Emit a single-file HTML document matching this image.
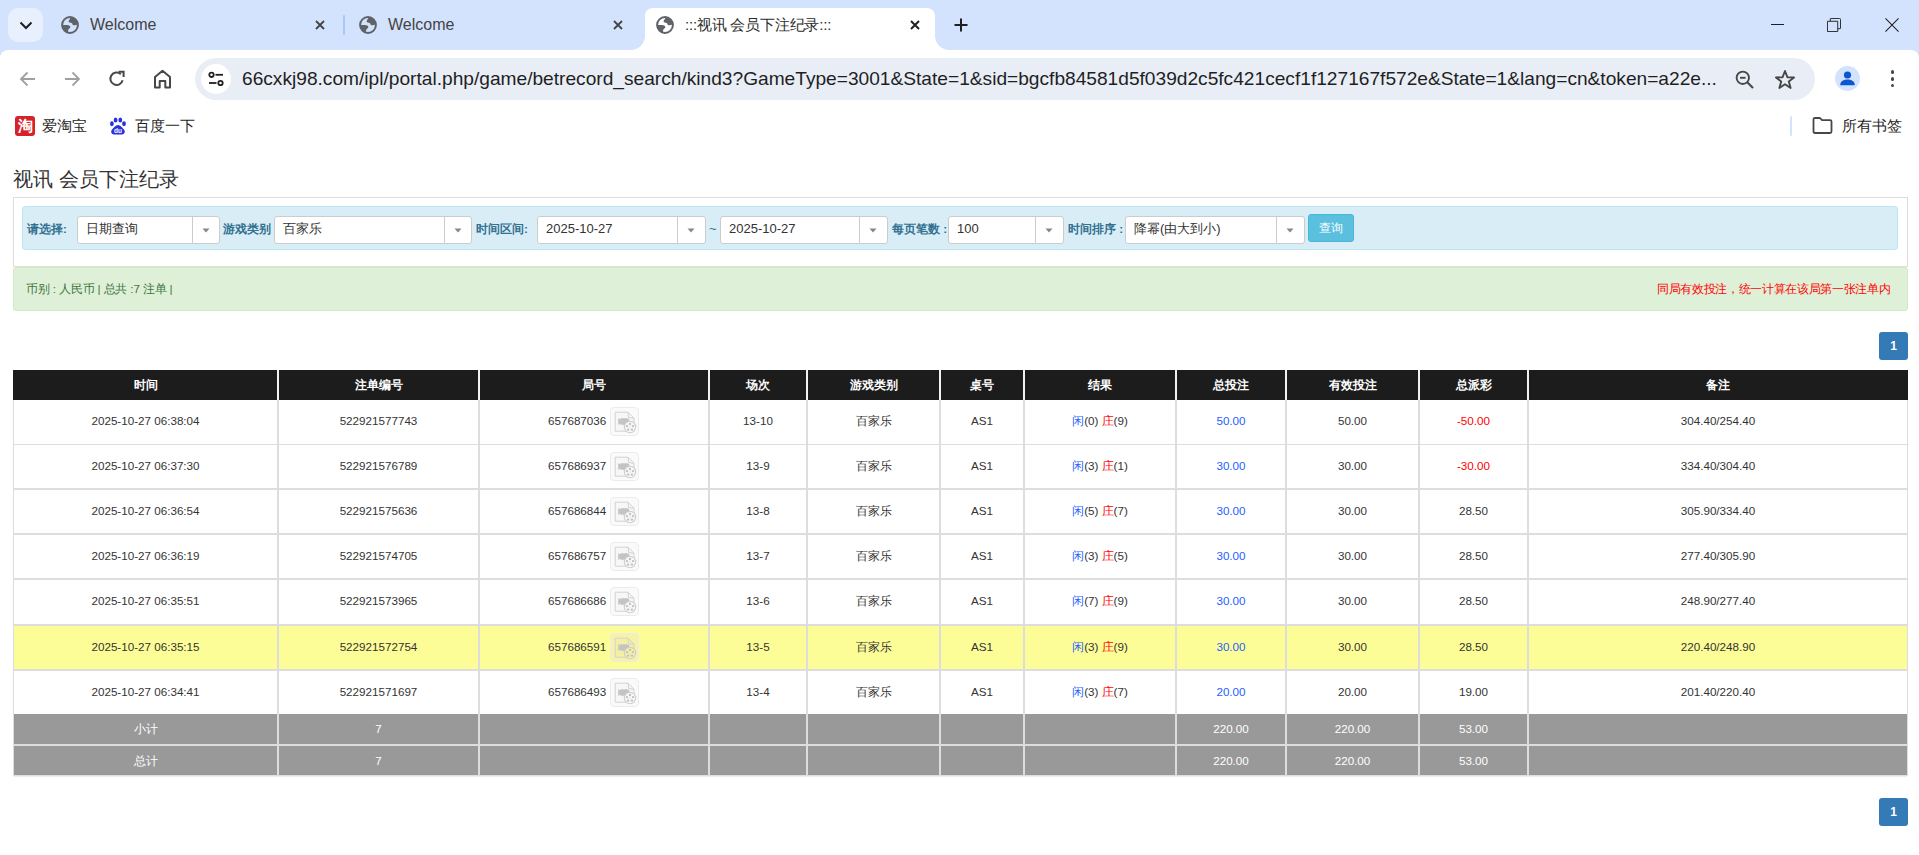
<!DOCTYPE html><html><head><meta charset="utf-8"><style>
*{margin:0;padding:0;box-sizing:border-box}
html,body{width:1919px;height:855px;overflow:hidden;background:#fff;font-family:"Liberation Sans", sans-serif;position:relative}
.ab{position:absolute}
.c{position:absolute;text-align:center;white-space:nowrap}
</style></head><body>
<div class="ab" style="left:0;top:0;width:1919px;height:70px;background:#d3e3fd"></div>
<div class="ab" style="left:8px;top:8px;width:35px;height:34px;border-radius:10px;background:#e8f0fe"></div>
<svg class="ab" style="left:18px;top:18px" width="16" height="14" viewBox="0 0 16 14"><path d="M2.5 4.5 L8 10 L13.5 4.5" fill="none" stroke="#1f1f1f" stroke-width="2"/></svg>
<svg class="ab" style="left:61px;top:16px" width="18" height="18" viewBox="0 0 18 18"><defs><clipPath id="gc70"><circle cx="9" cy="9" r="8"/></clipPath></defs><circle cx="9" cy="9" r="7.9" fill="none" stroke="#5f6368" stroke-width="2"/><g clip-path="url(#gc70)" fill="#5f6368"><path d="M10 0.5 C9.6 2.5 7.6 4.0 7.5 5.4 C7.4 6.6 9.6 6.4 10.6 6.9 C11.8 7.5 11.4 9.2 12.6 9.2 C14 9.2 15.5 8.6 17.5 8.4 L17.5 0.5 Z"/><path d="M0.5 9 C3 9 6.6 8.8 8.2 9.6 C9.6 10.3 9.8 11.6 8.4 12.4 C7.2 13.1 6.8 14.5 7 17.5 L0.5 17.5 Z"/></g></svg>
<div class="ab" style="left:90px;top:15px;font-size:16px;color:#444;line-height:20px">Welcome</div>
<svg class="ab" style="left:315px;top:20px" width="10" height="10" viewBox="0 0 10 10"><path d="M1 1 L9 9 M9 1 L1 9" stroke="#444" stroke-width="1.8" fill="none"/></svg>
<div class="ab" style="left:343px;top:15px;width:2px;height:20px;border-radius:1px;background:#a8c7fa"></div>
<svg class="ab" style="left:359px;top:16px" width="18" height="18" viewBox="0 0 18 18"><defs><clipPath id="gc368"><circle cx="9" cy="9" r="8"/></clipPath></defs><circle cx="9" cy="9" r="7.9" fill="none" stroke="#5f6368" stroke-width="2"/><g clip-path="url(#gc368)" fill="#5f6368"><path d="M10 0.5 C9.6 2.5 7.6 4.0 7.5 5.4 C7.4 6.6 9.6 6.4 10.6 6.9 C11.8 7.5 11.4 9.2 12.6 9.2 C14 9.2 15.5 8.6 17.5 8.4 L17.5 0.5 Z"/><path d="M0.5 9 C3 9 6.6 8.8 8.2 9.6 C9.6 10.3 9.8 11.6 8.4 12.4 C7.2 13.1 6.8 14.5 7 17.5 L0.5 17.5 Z"/></g></svg>
<div class="ab" style="left:388px;top:15px;font-size:16px;color:#444;line-height:20px">Welcome</div>
<svg class="ab" style="left:613px;top:20px" width="10" height="10" viewBox="0 0 10 10"><path d="M1 1 L9 9 M9 1 L1 9" stroke="#444" stroke-width="1.8" fill="none"/></svg>
<div class="ab" style="left:645px;top:8px;width:290px;height:42px;background:#fff;border-radius:8px 8px 0 0"></div>
<div class="ab" style="left:631px;top:36px;width:14px;height:14px;background:radial-gradient(circle at 0 0,#d3e3fd 13.5px,#fff 14.2px)"></div>
<div class="ab" style="left:935px;top:36px;width:14px;height:14px;background:radial-gradient(circle at 100% 0,#d3e3fd 13.5px,#fff 14.2px)"></div>
<svg class="ab" style="left:656px;top:16px" width="18" height="18" viewBox="0 0 18 18"><defs><clipPath id="gc665"><circle cx="9" cy="9" r="8"/></clipPath></defs><circle cx="9" cy="9" r="7.9" fill="none" stroke="#5f6368" stroke-width="2"/><g clip-path="url(#gc665)" fill="#5f6368"><path d="M10 0.5 C9.6 2.5 7.6 4.0 7.5 5.4 C7.4 6.6 9.6 6.4 10.6 6.9 C11.8 7.5 11.4 9.2 12.6 9.2 C14 9.2 15.5 8.6 17.5 8.4 L17.5 0.5 Z"/><path d="M0.5 9 C3 9 6.6 8.8 8.2 9.6 C9.6 10.3 9.8 11.6 8.4 12.4 C7.2 13.1 6.8 14.5 7 17.5 L0.5 17.5 Z"/></g></svg>
<div class="ab" style="left:685px;top:15px;font-size:15px;letter-spacing:-0.2px;color:#2b2b2b;line-height:20px">:::视讯 会员下注纪录:::</div>
<svg class="ab" style="left:910px;top:20px" width="10" height="10" viewBox="0 0 10 10"><path d="M1 1 L9 9 M9 1 L1 9" stroke="#1f1f1f" stroke-width="2" fill="none"/></svg>
<svg class="ab" style="left:954px;top:18px" width="14" height="14" viewBox="0 0 14 14"><path d="M7 0.5 V13.5 M0.5 7 H13.5" stroke="#1f1f1f" stroke-width="2" fill="none"/></svg>
<div class="ab" style="left:1771px;top:24px;width:13px;height:1px;background:#1f1f1f"></div>
<svg class="ab" style="left:1827px;top:18px" width="14" height="14" viewBox="0 0 15 15"><path d="M0.5 3.5 H11.5 V14.5 H0.5 Z" fill="none" stroke="#1f1f1f" stroke-width="1"/><path d="M3.5 3.5 V1 Q3.5 0.5 4 0.5 H13.5 Q14.5 0.5 14.5 1.5 V11 Q14.5 11.5 14 11.5 H11.5" fill="none" stroke="#1f1f1f" stroke-width="1"/></svg>
<svg class="ab" style="left:1884.5px;top:17.5px" width="14" height="14" viewBox="0 0 15 15"><path d="M0.5 0.5 L14.5 14.5 M14.5 0.5 L0.5 14.5" stroke="#1f1f1f" stroke-width="1.1" fill="none"/></svg>
<div class="ab" style="left:0;top:50px;width:1919px;height:805px;background:#fff;border-radius:8px 8px 0 0"></div>
<svg class="ab" style="left:19px;top:70px" width="18" height="18" viewBox="0 0 18 18"><path d="M16 9 H2.5 M8.5 2.5 L2 9 L8.5 15.5" fill="none" stroke="#a0a0a0" stroke-width="1.8"/></svg>
<svg class="ab" style="left:63px;top:70px" width="18" height="18" viewBox="0 0 18 18"><path d="M2 9 H15.5 M9.5 2.5 L16 9 L9.5 15.5" fill="none" stroke="#a0a0a0" stroke-width="1.8"/></svg>
<svg class="ab" style="left:108px;top:70px" width="18" height="18" viewBox="0 0 18 18"><path d="M14.6 10.2 A6.2 6.2 0 1 1 12.8 4.2" fill="none" stroke="#474747" stroke-width="2"/><path d="M10.5 1.8 H15.6 V6.9" fill="none" stroke="#474747" stroke-width="2"/></svg>
<svg class="ab" style="left:153px;top:69px" width="19" height="20" viewBox="0 0 19 20"><path d="M2 18.5 V8 L9.5 1.8 L17 8 V18.5 H12.3 V12 H6.7 V18.5 Z" fill="none" stroke="#474747" stroke-width="2" stroke-linejoin="round"/></svg>
<div class="ab" style="left:195px;top:58px;width:1620px;height:42px;border-radius:21px;background:#e9eef6"></div>
<div class="ab" style="left:201px;top:64px;width:30px;height:30px;border-radius:15px;background:#fff"></div>
<svg class="ab" style="left:207px;top:70px" width="18" height="18" viewBox="0 0 18 18"><circle cx="4.5" cy="4.8" r="2.2" fill="none" stroke="#1f1f1f" stroke-width="1.8"/><path d="M8.5 4.8 H16" stroke="#1f1f1f" stroke-width="1.8"/><circle cx="13.5" cy="13" r="2.2" fill="none" stroke="#1f1f1f" stroke-width="1.8"/><path d="M2 13 H9.5" stroke="#1f1f1f" stroke-width="1.8"/></svg>
<div id="url" class="ab" style="left:242px;top:67px;font-size:19.15px;line-height:24px;color:#1f1f1f;white-space:nowrap">66cxkj98.com/ipl/portal.php/game/betrecord_search/kind3?GameType=3001&amp;State=1&amp;sid=bgcfb84581d5f039d2c5fc421cecf1f127167f572e&amp;State=1&amp;lang=cn&amp;token=a22e...</div>
<svg class="ab" style="left:1735px;top:70px" width="20" height="20" viewBox="0 0 20 20"><circle cx="7.8" cy="7.8" r="6.2" fill="none" stroke="#474747" stroke-width="1.9"/><path d="M5 7.8 H10.6" stroke="#474747" stroke-width="1.9"/><path d="M12.3 12.3 L18 18" stroke="#474747" stroke-width="2.1"/></svg>
<svg class="ab" style="left:1774px;top:69px" width="22" height="21" viewBox="0 0 22 21"><path d="M11 2 L13.4 8.2 L20 8.4 L14.8 12.5 L16.6 19 L11 15.3 L5.4 19 L7.2 12.5 L2 8.4 L8.6 8.2 Z" fill="none" stroke="#474747" stroke-width="1.9" stroke-linejoin="round"/></svg>
<div class="ab" style="left:1835px;top:66px;width:25px;height:25px;border-radius:13px;background:#d3e3fd"></div>
<svg class="ab" style="left:1838px;top:69px" width="19" height="19" viewBox="0 0 19 19"><circle cx="9.5" cy="6" r="3.6" fill="#0b57d0"/><path d="M2.2 16.2 C2.2 12 6 10.6 9.5 10.6 C13 10.6 16.8 12 16.8 16.2 Z" fill="#0b57d0"/></svg>
<div class="ab" style="left:1890.5px;top:69.89999999999999px;width:3.8px;height:3.8px;border-radius:2px;background:#474747"></div>
<div class="ab" style="left:1890.5px;top:76.89999999999999px;width:3.8px;height:3.8px;border-radius:2px;background:#474747"></div>
<div class="ab" style="left:1890.5px;top:83.69999999999999px;width:3.8px;height:3.8px;border-radius:2px;background:#474747"></div>
<div class="ab" style="left:15px;top:116px;width:20px;height:20px;border-radius:3px;background:#d7222a;color:#fff;font-size:15px;line-height:20px;text-align:center;font-weight:bold">淘</div>
<div class="ab" style="left:42px;top:117px;font-size:14.5px;line-height:18px;color:#1f1f1f">爱淘宝</div>
<svg class="ab" style="left:109px;top:117px" width="18" height="18" viewBox="0 0 18 18"><ellipse cx="2.9" cy="6.75" rx="1.9" ry="2.4" fill="#2932e1"/><ellipse cx="6.6" cy="3" rx="1.9" ry="2.5" fill="#2932e1"/><ellipse cx="11.3" cy="3" rx="1.9" ry="2.5" fill="#2932e1"/><ellipse cx="15" cy="6.75" rx="1.9" ry="2.4" fill="#2932e1"/><path d="M9 8 C6.5 8 5 10.5 3.5 12 C1.6 13.6 1.6 17.4 5 17.4 H13 C16.4 17.4 16.4 13.6 14.5 12 C13 10.5 11.5 8 9 8 Z" fill="#2932e1"/><text x="9" y="16" font-size="6.5" fill="#fff" text-anchor="middle" font-family="Liberation Sans" font-weight="bold">du</text></svg>
<div class="ab" style="left:135px;top:117px;font-size:14.5px;line-height:18px;color:#1f1f1f">百度一下</div>
<div class="ab" style="left:1790px;top:116px;width:2px;height:20px;background:#d3e3fd;border-radius:1px"></div>
<svg class="ab" style="left:1812px;top:117px" width="21" height="17" viewBox="0 0 21 17"><path d="M1.5 2.5 Q1.5 1 3 1 H8 L10 3.2 H18 Q19.5 3.2 19.5 4.7 V14.5 Q19.5 16 18 16 H3 Q1.5 16 1.5 14.5 Z" fill="none" stroke="#474747" stroke-width="1.8" stroke-linejoin="round"/></svg>
<div class="ab" style="left:1842px;top:117px;font-size:14.5px;line-height:18px;color:#1f1f1f">所有书签</div>
<div class="ab" style="left:13px;top:166px;font-size:20px;line-height:26px;color:#333;white-space:nowrap">视讯 会员下注纪录</div>
<div class="ab" style="left:13px;top:197px;width:1895px;height:70px;border:1px solid #ddd;background:#fff"></div>
<div class="ab" style="left:22px;top:206px;width:1876px;height:44px;border:1px solid #bce8f1;border-radius:3px;background:#d9edf7"></div>
<div class="ab" style="left:27px;top:221px;font-size:11.7px;font-weight:bold;color:#31708f;line-height:16px;white-space:nowrap">请选择:</div>
<div class="ab" style="left:77px;top:216px;width:143px;height:28px;border:1px solid #ccc;border-radius:3px;background:#fff"></div>
<div class="ab" style="left:192px;top:217px;width:1px;height:26px;background:#ccc"></div>
<svg class="ab" style="left:201.5px;top:227.5px" width="8" height="5" viewBox="0 0 8 5"><path d="M0.5 0.5 H7.5 L4 4.5 Z" fill="#888"/></svg>
<div class="ab" style="left:86px;top:221px;font-size:13px;line-height:16px;color:#333;white-space:nowrap">日期查询</div>
<div class="ab" style="left:223px;top:221px;font-size:11.7px;font-weight:bold;color:#31708f;line-height:16px;white-space:nowrap">游戏类别</div>
<div class="ab" style="left:274px;top:216px;width:198px;height:28px;border:1px solid #ccc;border-radius:3px;background:#fff"></div>
<div class="ab" style="left:444px;top:217px;width:1px;height:26px;background:#ccc"></div>
<svg class="ab" style="left:453.5px;top:227.5px" width="8" height="5" viewBox="0 0 8 5"><path d="M0.5 0.5 H7.5 L4 4.5 Z" fill="#888"/></svg>
<div class="ab" style="left:283px;top:221px;font-size:13px;line-height:16px;color:#333;white-space:nowrap">百家乐</div>
<div class="ab" style="left:476px;top:221px;font-size:11.7px;font-weight:bold;color:#31708f;line-height:16px;white-space:nowrap">时间区间:</div>
<div class="ab" style="left:537px;top:216px;width:169px;height:28px;border:1px solid #ccc;border-radius:3px;background:#fff"></div>
<div class="ab" style="left:677px;top:217px;width:1px;height:26px;background:#ccc"></div>
<svg class="ab" style="left:687.0px;top:227.5px" width="8" height="5" viewBox="0 0 8 5"><path d="M0.5 0.5 H7.5 L4 4.5 Z" fill="#888"/></svg>
<div class="ab" style="left:546px;top:221px;font-size:13px;line-height:16px;color:#333;white-space:nowrap">2025-10-27</div>
<div class="ab" style="left:709px;top:221px;font-size:13px;line-height:16px;color:#31708f">~</div>
<div class="ab" style="left:720px;top:216px;width:168px;height:28px;border:1px solid #ccc;border-radius:3px;background:#fff"></div>
<div class="ab" style="left:859px;top:217px;width:1px;height:26px;background:#ccc"></div>
<svg class="ab" style="left:869.0px;top:227.5px" width="8" height="5" viewBox="0 0 8 5"><path d="M0.5 0.5 H7.5 L4 4.5 Z" fill="#888"/></svg>
<div class="ab" style="left:729px;top:221px;font-size:13px;line-height:16px;color:#333;white-space:nowrap">2025-10-27</div>
<div class="ab" style="left:892px;top:221px;font-size:11.7px;font-weight:bold;color:#31708f;line-height:16px;white-space:nowrap">每页笔数 :</div>
<div class="ab" style="left:948px;top:216px;width:116px;height:28px;border:1px solid #ccc;border-radius:3px;background:#fff"></div>
<div class="ab" style="left:1035px;top:217px;width:1px;height:26px;background:#ccc"></div>
<svg class="ab" style="left:1045.0px;top:227.5px" width="8" height="5" viewBox="0 0 8 5"><path d="M0.5 0.5 H7.5 L4 4.5 Z" fill="#888"/></svg>
<div class="ab" style="left:957px;top:221px;font-size:13px;line-height:16px;color:#333;white-space:nowrap">100</div>
<div class="ab" style="left:1068px;top:221px;font-size:11.7px;font-weight:bold;color:#31708f;line-height:16px;white-space:nowrap">时间排序 :</div>
<div class="ab" style="left:1125px;top:216px;width:180px;height:28px;border:1px solid #ccc;border-radius:3px;background:#fff"></div>
<div class="ab" style="left:1276px;top:217px;width:1px;height:26px;background:#ccc"></div>
<svg class="ab" style="left:1286.0px;top:227.5px" width="8" height="5" viewBox="0 0 8 5"><path d="M0.5 0.5 H7.5 L4 4.5 Z" fill="#888"/></svg>
<div class="ab" style="left:1134px;top:221px;font-size:13px;line-height:16px;color:#333;white-space:nowrap">降幂(由大到小)</div>
<div class="ab" style="left:1308px;top:214px;width:46px;height:28px;border:1px solid #46b8da;border-radius:3px;background:#5bc0de;color:#fff;font-size:12px;line-height:26px;text-align:center">查询</div>
<div class="ab" style="left:13px;top:267px;width:1895px;height:44px;border:1px solid #d6e9c6;border-radius:3px;background:#dff0d8"></div>
<div class="ab" style="left:26px;top:281px;font-size:11.65px;letter-spacing:-0.15px;line-height:16px;color:#3c763d;white-space:nowrap">币别 : 人民币 | 总共 :7 注单 |</div>
<div class="ab" style="left:1657px;top:281px;font-size:12px;letter-spacing:-0.33px;line-height:16px;color:#ff0000;white-space:nowrap">同局有效投注，统一计算在该局第一张注单内</div>
<div class="ab" style="left:1879px;top:332px;width:29px;height:28px;border-radius:3px;background:#337ab7;color:#fff;font-size:12px;font-weight:bold;line-height:28px;text-align:center">1</div>
<div class="ab" style="left:1879px;top:798px;width:29px;height:28px;border-radius:3px;background:#337ab7;color:#fff;font-size:12px;font-weight:bold;line-height:28px;text-align:center">1</div>
<div class="ab" style="left:13px;top:370px;width:1895px;height:30px;background:#1c1c1c"></div>
<div class="ab" style="left:277px;top:370px;width:2px;height:30px;background:#f2f2f2"></div>
<div class="ab" style="left:478px;top:370px;width:2px;height:30px;background:#f2f2f2"></div>
<div class="ab" style="left:708px;top:370px;width:2px;height:30px;background:#f2f2f2"></div>
<div class="ab" style="left:806px;top:370px;width:2px;height:30px;background:#f2f2f2"></div>
<div class="ab" style="left:939px;top:370px;width:2px;height:30px;background:#f2f2f2"></div>
<div class="ab" style="left:1023px;top:370px;width:2px;height:30px;background:#f2f2f2"></div>
<div class="ab" style="left:1175px;top:370px;width:2px;height:30px;background:#f2f2f2"></div>
<div class="ab" style="left:1285px;top:370px;width:2px;height:30px;background:#f2f2f2"></div>
<div class="ab" style="left:1418px;top:370px;width:2px;height:30px;background:#f2f2f2"></div>
<div class="ab" style="left:1527px;top:370px;width:2px;height:30px;background:#f2f2f2"></div>
<div class="c" style="left:14px;top:370px;width:263px;height:30px;line-height:30px;font-size:12px;font-weight:bold;color:#fff">时间</div>
<div class="c" style="left:279px;top:370px;width:199px;height:30px;line-height:30px;font-size:12px;font-weight:bold;color:#fff">注单编号</div>
<div class="c" style="left:480px;top:370px;width:228px;height:30px;line-height:30px;font-size:12px;font-weight:bold;color:#fff">局号</div>
<div class="c" style="left:710px;top:370px;width:96px;height:30px;line-height:30px;font-size:12px;font-weight:bold;color:#fff">场次</div>
<div class="c" style="left:808px;top:370px;width:131px;height:30px;line-height:30px;font-size:12px;font-weight:bold;color:#fff">游戏类别</div>
<div class="c" style="left:941px;top:370px;width:82px;height:30px;line-height:30px;font-size:12px;font-weight:bold;color:#fff">桌号</div>
<div class="c" style="left:1025px;top:370px;width:150px;height:30px;line-height:30px;font-size:12px;font-weight:bold;color:#fff">结果</div>
<div class="c" style="left:1177px;top:370px;width:108px;height:30px;line-height:30px;font-size:12px;font-weight:bold;color:#fff">总投注</div>
<div class="c" style="left:1287px;top:370px;width:131px;height:30px;line-height:30px;font-size:12px;font-weight:bold;color:#fff">有效投注</div>
<div class="c" style="left:1420px;top:370px;width:107px;height:30px;line-height:30px;font-size:12px;font-weight:bold;color:#fff">总派彩</div>
<div class="c" style="left:1529px;top:370px;width:378px;height:30px;line-height:30px;font-size:12px;font-weight:bold;color:#fff">备注</div>
<div class="ab" style="left:13px;top:400px;width:1895px;height:314px;background:#fff"></div>
<div class="ab" style="left:14px;top:626px;width:1893px;height:43px;background:#fdfd98"></div>
<div class="ab" style="left:13px;top:444px;width:1895px;height:1px;background:#ddd"></div>
<div class="ab" style="left:13px;top:488px;width:1895px;height:2px;background:#ddd"></div>
<div class="ab" style="left:13px;top:533px;width:1895px;height:2px;background:#ddd"></div>
<div class="ab" style="left:13px;top:578px;width:1895px;height:2px;background:#ddd"></div>
<div class="ab" style="left:13px;top:624px;width:1895px;height:2px;background:#ddd"></div>
<div class="ab" style="left:13px;top:669px;width:1895px;height:2px;background:#ddd"></div>
<div class="ab" style="left:13px;top:400px;width:1px;height:376px;background:#ddd"></div>
<div class="ab" style="left:1907px;top:400px;width:1px;height:314px;background:#ddd"></div>
<div class="ab" style="left:277px;top:400px;width:2px;height:314px;background:#ddd"></div>
<div class="ab" style="left:478px;top:400px;width:2px;height:314px;background:#ddd"></div>
<div class="ab" style="left:708px;top:400px;width:2px;height:314px;background:#ddd"></div>
<div class="ab" style="left:806px;top:400px;width:2px;height:314px;background:#ddd"></div>
<div class="ab" style="left:939px;top:400px;width:2px;height:314px;background:#ddd"></div>
<div class="ab" style="left:1023px;top:400px;width:2px;height:314px;background:#ddd"></div>
<div class="ab" style="left:1175px;top:400px;width:2px;height:314px;background:#ddd"></div>
<div class="ab" style="left:1285px;top:400px;width:2px;height:314px;background:#ddd"></div>
<div class="ab" style="left:1418px;top:400px;width:2px;height:314px;background:#ddd"></div>
<div class="ab" style="left:1527px;top:400px;width:2px;height:314px;background:#ddd"></div>
<div class="c" style="left:14px;top:399px;width:263px;height:44px;line-height:44px;font-size:11.65px;color:#333;">2025-10-27 06:38:04</div>
<div class="c" style="left:279px;top:399px;width:199px;height:44px;line-height:44px;font-size:11.65px;color:#333;">522921577743</div>
<div class="ab" style="left:548px;top:399px;height:44px;line-height:44px;font-size:11.65px;color:#333;white-space:nowrap">657687036</div>
<svg width="29" height="29" viewBox="0 0 29 29" style="position:absolute;left:610px;top:407px"><rect x="0.5" y="0.5" width="28" height="28" rx="3.5" fill="#fafafa" stroke="#ebebeb"/><path d="M5.2 5.2 H18 L24 11.2 V24.2 H5.2 Z" fill="#f7f7f7" stroke="#d2d2d2" stroke-width="1"/><path d="M18 5.2 L18.6 10.6 L24 11.2" fill="none" stroke="#d2d2d2" stroke-width="1"/><path d="M8.2 11 L10.4 12.6 V11.2 H17.4 L19.2 12.2 V16.6 L17.4 17.8 H10.4 V16.4 L8.2 18 Z" fill="#c4c4c4"/><circle cx="20" cy="20" r="5.7" fill="#f7f7f7" stroke="#cdcdcd" stroke-width="1.1"/><circle cx="20" cy="16.9" r="1.2" fill="#c2c2c2"/><circle cx="23" cy="19.1" r="1.2" fill="#c2c2c2"/><circle cx="21.9" cy="22.6" r="1.2" fill="#c2c2c2"/><circle cx="18.1" cy="22.6" r="1.2" fill="#c2c2c2"/><circle cx="17" cy="19.1" r="1.2" fill="#c2c2c2"/><circle cx="20" cy="20" r="0.5" fill="#c8c8c8"/></svg>
<div class="c" style="left:710px;top:399px;width:96px;height:44px;line-height:44px;font-size:11.65px;color:#333;">13-10</div>
<div class="c" style="left:808px;top:399px;width:131px;height:44px;line-height:44px;font-size:11.65px;color:#333;">百家乐</div>
<div class="c" style="left:941px;top:399px;width:82px;height:44px;line-height:44px;font-size:11.65px;color:#333;">AS1</div>
<div class="c" style="left:1025px;top:399px;width:150px;height:44px;line-height:44px;font-size:11.65px;color:#333;"><span style="color:#1e5eff">闲</span>(0) <span style="color:#f00">庄</span>(9)</div>
<div class="c" style="left:1177px;top:399px;width:108px;height:44px;line-height:44px;font-size:11.65px;color:#1e5eff;">50.00</div>
<div class="c" style="left:1287px;top:399px;width:131px;height:44px;line-height:44px;font-size:11.65px;color:#333;">50.00</div>
<div class="c" style="left:1420px;top:399px;width:107px;height:44px;line-height:44px;font-size:11.65px;color:#f00;">-50.00</div>
<div class="c" style="left:1529px;top:399px;width:378px;height:44px;line-height:44px;font-size:11.65px;color:#333;">304.40/254.40</div>
<div class="c" style="left:14px;top:444px;width:263px;height:43px;line-height:43px;font-size:11.65px;color:#333;">2025-10-27 06:37:30</div>
<div class="c" style="left:279px;top:444px;width:199px;height:43px;line-height:43px;font-size:11.65px;color:#333;">522921576789</div>
<div class="ab" style="left:548px;top:444px;height:43px;line-height:43px;font-size:11.65px;color:#333;white-space:nowrap">657686937</div>
<svg width="29" height="29" viewBox="0 0 29 29" style="position:absolute;left:610px;top:452px"><rect x="0.5" y="0.5" width="28" height="28" rx="3.5" fill="#fafafa" stroke="#ebebeb"/><path d="M5.2 5.2 H18 L24 11.2 V24.2 H5.2 Z" fill="#f7f7f7" stroke="#d2d2d2" stroke-width="1"/><path d="M18 5.2 L18.6 10.6 L24 11.2" fill="none" stroke="#d2d2d2" stroke-width="1"/><path d="M8.2 11 L10.4 12.6 V11.2 H17.4 L19.2 12.2 V16.6 L17.4 17.8 H10.4 V16.4 L8.2 18 Z" fill="#c4c4c4"/><circle cx="20" cy="20" r="5.7" fill="#f7f7f7" stroke="#cdcdcd" stroke-width="1.1"/><circle cx="20" cy="16.9" r="1.2" fill="#c2c2c2"/><circle cx="23" cy="19.1" r="1.2" fill="#c2c2c2"/><circle cx="21.9" cy="22.6" r="1.2" fill="#c2c2c2"/><circle cx="18.1" cy="22.6" r="1.2" fill="#c2c2c2"/><circle cx="17" cy="19.1" r="1.2" fill="#c2c2c2"/><circle cx="20" cy="20" r="0.5" fill="#c8c8c8"/></svg>
<div class="c" style="left:710px;top:444px;width:96px;height:43px;line-height:43px;font-size:11.65px;color:#333;">13-9</div>
<div class="c" style="left:808px;top:444px;width:131px;height:43px;line-height:43px;font-size:11.65px;color:#333;">百家乐</div>
<div class="c" style="left:941px;top:444px;width:82px;height:43px;line-height:43px;font-size:11.65px;color:#333;">AS1</div>
<div class="c" style="left:1025px;top:444px;width:150px;height:43px;line-height:43px;font-size:11.65px;color:#333;"><span style="color:#1e5eff">闲</span>(3) <span style="color:#f00">庄</span>(1)</div>
<div class="c" style="left:1177px;top:444px;width:108px;height:43px;line-height:43px;font-size:11.65px;color:#1e5eff;">30.00</div>
<div class="c" style="left:1287px;top:444px;width:131px;height:43px;line-height:43px;font-size:11.65px;color:#333;">30.00</div>
<div class="c" style="left:1420px;top:444px;width:107px;height:43px;line-height:43px;font-size:11.65px;color:#f00;">-30.00</div>
<div class="c" style="left:1529px;top:444px;width:378px;height:43px;line-height:43px;font-size:11.65px;color:#333;">334.40/304.40</div>
<div class="c" style="left:14px;top:489px;width:263px;height:43px;line-height:43px;font-size:11.65px;color:#333;">2025-10-27 06:36:54</div>
<div class="c" style="left:279px;top:489px;width:199px;height:43px;line-height:43px;font-size:11.65px;color:#333;">522921575636</div>
<div class="ab" style="left:548px;top:489px;height:43px;line-height:43px;font-size:11.65px;color:#333;white-space:nowrap">657686844</div>
<svg width="29" height="29" viewBox="0 0 29 29" style="position:absolute;left:610px;top:497px"><rect x="0.5" y="0.5" width="28" height="28" rx="3.5" fill="#fafafa" stroke="#ebebeb"/><path d="M5.2 5.2 H18 L24 11.2 V24.2 H5.2 Z" fill="#f7f7f7" stroke="#d2d2d2" stroke-width="1"/><path d="M18 5.2 L18.6 10.6 L24 11.2" fill="none" stroke="#d2d2d2" stroke-width="1"/><path d="M8.2 11 L10.4 12.6 V11.2 H17.4 L19.2 12.2 V16.6 L17.4 17.8 H10.4 V16.4 L8.2 18 Z" fill="#c4c4c4"/><circle cx="20" cy="20" r="5.7" fill="#f7f7f7" stroke="#cdcdcd" stroke-width="1.1"/><circle cx="20" cy="16.9" r="1.2" fill="#c2c2c2"/><circle cx="23" cy="19.1" r="1.2" fill="#c2c2c2"/><circle cx="21.9" cy="22.6" r="1.2" fill="#c2c2c2"/><circle cx="18.1" cy="22.6" r="1.2" fill="#c2c2c2"/><circle cx="17" cy="19.1" r="1.2" fill="#c2c2c2"/><circle cx="20" cy="20" r="0.5" fill="#c8c8c8"/></svg>
<div class="c" style="left:710px;top:489px;width:96px;height:43px;line-height:43px;font-size:11.65px;color:#333;">13-8</div>
<div class="c" style="left:808px;top:489px;width:131px;height:43px;line-height:43px;font-size:11.65px;color:#333;">百家乐</div>
<div class="c" style="left:941px;top:489px;width:82px;height:43px;line-height:43px;font-size:11.65px;color:#333;">AS1</div>
<div class="c" style="left:1025px;top:489px;width:150px;height:43px;line-height:43px;font-size:11.65px;color:#333;"><span style="color:#1e5eff">闲</span>(5) <span style="color:#f00">庄</span>(7)</div>
<div class="c" style="left:1177px;top:489px;width:108px;height:43px;line-height:43px;font-size:11.65px;color:#1e5eff;">30.00</div>
<div class="c" style="left:1287px;top:489px;width:131px;height:43px;line-height:43px;font-size:11.65px;color:#333;">30.00</div>
<div class="c" style="left:1420px;top:489px;width:107px;height:43px;line-height:43px;font-size:11.65px;color:#333;">28.50</div>
<div class="c" style="left:1529px;top:489px;width:378px;height:43px;line-height:43px;font-size:11.65px;color:#333;">305.90/334.40</div>
<div class="c" style="left:14px;top:534px;width:263px;height:43px;line-height:43px;font-size:11.65px;color:#333;">2025-10-27 06:36:19</div>
<div class="c" style="left:279px;top:534px;width:199px;height:43px;line-height:43px;font-size:11.65px;color:#333;">522921574705</div>
<div class="ab" style="left:548px;top:534px;height:43px;line-height:43px;font-size:11.65px;color:#333;white-space:nowrap">657686757</div>
<svg width="29" height="29" viewBox="0 0 29 29" style="position:absolute;left:610px;top:542px"><rect x="0.5" y="0.5" width="28" height="28" rx="3.5" fill="#fafafa" stroke="#ebebeb"/><path d="M5.2 5.2 H18 L24 11.2 V24.2 H5.2 Z" fill="#f7f7f7" stroke="#d2d2d2" stroke-width="1"/><path d="M18 5.2 L18.6 10.6 L24 11.2" fill="none" stroke="#d2d2d2" stroke-width="1"/><path d="M8.2 11 L10.4 12.6 V11.2 H17.4 L19.2 12.2 V16.6 L17.4 17.8 H10.4 V16.4 L8.2 18 Z" fill="#c4c4c4"/><circle cx="20" cy="20" r="5.7" fill="#f7f7f7" stroke="#cdcdcd" stroke-width="1.1"/><circle cx="20" cy="16.9" r="1.2" fill="#c2c2c2"/><circle cx="23" cy="19.1" r="1.2" fill="#c2c2c2"/><circle cx="21.9" cy="22.6" r="1.2" fill="#c2c2c2"/><circle cx="18.1" cy="22.6" r="1.2" fill="#c2c2c2"/><circle cx="17" cy="19.1" r="1.2" fill="#c2c2c2"/><circle cx="20" cy="20" r="0.5" fill="#c8c8c8"/></svg>
<div class="c" style="left:710px;top:534px;width:96px;height:43px;line-height:43px;font-size:11.65px;color:#333;">13-7</div>
<div class="c" style="left:808px;top:534px;width:131px;height:43px;line-height:43px;font-size:11.65px;color:#333;">百家乐</div>
<div class="c" style="left:941px;top:534px;width:82px;height:43px;line-height:43px;font-size:11.65px;color:#333;">AS1</div>
<div class="c" style="left:1025px;top:534px;width:150px;height:43px;line-height:43px;font-size:11.65px;color:#333;"><span style="color:#1e5eff">闲</span>(3) <span style="color:#f00">庄</span>(5)</div>
<div class="c" style="left:1177px;top:534px;width:108px;height:43px;line-height:43px;font-size:11.65px;color:#1e5eff;">30.00</div>
<div class="c" style="left:1287px;top:534px;width:131px;height:43px;line-height:43px;font-size:11.65px;color:#333;">30.00</div>
<div class="c" style="left:1420px;top:534px;width:107px;height:43px;line-height:43px;font-size:11.65px;color:#333;">28.50</div>
<div class="c" style="left:1529px;top:534px;width:378px;height:43px;line-height:43px;font-size:11.65px;color:#333;">277.40/305.90</div>
<div class="c" style="left:14px;top:579px;width:263px;height:44px;line-height:44px;font-size:11.65px;color:#333;">2025-10-27 06:35:51</div>
<div class="c" style="left:279px;top:579px;width:199px;height:44px;line-height:44px;font-size:11.65px;color:#333;">522921573965</div>
<div class="ab" style="left:548px;top:579px;height:44px;line-height:44px;font-size:11.65px;color:#333;white-space:nowrap">657686686</div>
<svg width="29" height="29" viewBox="0 0 29 29" style="position:absolute;left:610px;top:587px"><rect x="0.5" y="0.5" width="28" height="28" rx="3.5" fill="#fafafa" stroke="#ebebeb"/><path d="M5.2 5.2 H18 L24 11.2 V24.2 H5.2 Z" fill="#f7f7f7" stroke="#d2d2d2" stroke-width="1"/><path d="M18 5.2 L18.6 10.6 L24 11.2" fill="none" stroke="#d2d2d2" stroke-width="1"/><path d="M8.2 11 L10.4 12.6 V11.2 H17.4 L19.2 12.2 V16.6 L17.4 17.8 H10.4 V16.4 L8.2 18 Z" fill="#c4c4c4"/><circle cx="20" cy="20" r="5.7" fill="#f7f7f7" stroke="#cdcdcd" stroke-width="1.1"/><circle cx="20" cy="16.9" r="1.2" fill="#c2c2c2"/><circle cx="23" cy="19.1" r="1.2" fill="#c2c2c2"/><circle cx="21.9" cy="22.6" r="1.2" fill="#c2c2c2"/><circle cx="18.1" cy="22.6" r="1.2" fill="#c2c2c2"/><circle cx="17" cy="19.1" r="1.2" fill="#c2c2c2"/><circle cx="20" cy="20" r="0.5" fill="#c8c8c8"/></svg>
<div class="c" style="left:710px;top:579px;width:96px;height:44px;line-height:44px;font-size:11.65px;color:#333;">13-6</div>
<div class="c" style="left:808px;top:579px;width:131px;height:44px;line-height:44px;font-size:11.65px;color:#333;">百家乐</div>
<div class="c" style="left:941px;top:579px;width:82px;height:44px;line-height:44px;font-size:11.65px;color:#333;">AS1</div>
<div class="c" style="left:1025px;top:579px;width:150px;height:44px;line-height:44px;font-size:11.65px;color:#333;"><span style="color:#1e5eff">闲</span>(7) <span style="color:#f00">庄</span>(9)</div>
<div class="c" style="left:1177px;top:579px;width:108px;height:44px;line-height:44px;font-size:11.65px;color:#1e5eff;">30.00</div>
<div class="c" style="left:1287px;top:579px;width:131px;height:44px;line-height:44px;font-size:11.65px;color:#333;">30.00</div>
<div class="c" style="left:1420px;top:579px;width:107px;height:44px;line-height:44px;font-size:11.65px;color:#333;">28.50</div>
<div class="c" style="left:1529px;top:579px;width:378px;height:44px;line-height:44px;font-size:11.65px;color:#333;">248.90/277.40</div>
<div class="c" style="left:14px;top:625px;width:263px;height:43px;line-height:43px;font-size:11.65px;color:#333;">2025-10-27 06:35:15</div>
<div class="c" style="left:279px;top:625px;width:199px;height:43px;line-height:43px;font-size:11.65px;color:#333;">522921572754</div>
<div class="ab" style="left:548px;top:625px;height:43px;line-height:43px;font-size:11.65px;color:#333;white-space:nowrap">657686591</div>
<svg width="29" height="29" viewBox="0 0 29 29" style="position:absolute;left:610px;top:633px"><rect x="0.5" y="0.5" width="28" height="28" rx="3.5" fill="#f6f3a8" stroke="#ebebeb"/><path d="M5.2 5.2 H18 L24 11.2 V24.2 H5.2 Z" fill="#f3f0a6" stroke="#d2d2d2" stroke-width="1"/><path d="M18 5.2 L18.6 10.6 L24 11.2" fill="none" stroke="#d2d2d2" stroke-width="1"/><path d="M8.2 11 L10.4 12.6 V11.2 H17.4 L19.2 12.2 V16.6 L17.4 17.8 H10.4 V16.4 L8.2 18 Z" fill="#c4c4c4"/><circle cx="20" cy="20" r="5.7" fill="#f3f0a6" stroke="#cdcdcd" stroke-width="1.1"/><circle cx="20" cy="16.9" r="1.2" fill="#c2c2c2"/><circle cx="23" cy="19.1" r="1.2" fill="#c2c2c2"/><circle cx="21.9" cy="22.6" r="1.2" fill="#c2c2c2"/><circle cx="18.1" cy="22.6" r="1.2" fill="#c2c2c2"/><circle cx="17" cy="19.1" r="1.2" fill="#c2c2c2"/><circle cx="20" cy="20" r="0.5" fill="#c8c8c8"/></svg>
<div class="c" style="left:710px;top:625px;width:96px;height:43px;line-height:43px;font-size:11.65px;color:#333;">13-5</div>
<div class="c" style="left:808px;top:625px;width:131px;height:43px;line-height:43px;font-size:11.65px;color:#333;">百家乐</div>
<div class="c" style="left:941px;top:625px;width:82px;height:43px;line-height:43px;font-size:11.65px;color:#333;">AS1</div>
<div class="c" style="left:1025px;top:625px;width:150px;height:43px;line-height:43px;font-size:11.65px;color:#333;"><span style="color:#1e5eff">闲</span>(3) <span style="color:#f00">庄</span>(9)</div>
<div class="c" style="left:1177px;top:625px;width:108px;height:43px;line-height:43px;font-size:11.65px;color:#1e5eff;">30.00</div>
<div class="c" style="left:1287px;top:625px;width:131px;height:43px;line-height:43px;font-size:11.65px;color:#333;">30.00</div>
<div class="c" style="left:1420px;top:625px;width:107px;height:43px;line-height:43px;font-size:11.65px;color:#333;">28.50</div>
<div class="c" style="left:1529px;top:625px;width:378px;height:43px;line-height:43px;font-size:11.65px;color:#333;">220.40/248.90</div>
<div class="c" style="left:14px;top:670px;width:263px;height:43px;line-height:43px;font-size:11.65px;color:#333;">2025-10-27 06:34:41</div>
<div class="c" style="left:279px;top:670px;width:199px;height:43px;line-height:43px;font-size:11.65px;color:#333;">522921571697</div>
<div class="ab" style="left:548px;top:670px;height:43px;line-height:43px;font-size:11.65px;color:#333;white-space:nowrap">657686493</div>
<svg width="29" height="29" viewBox="0 0 29 29" style="position:absolute;left:610px;top:678px"><rect x="0.5" y="0.5" width="28" height="28" rx="3.5" fill="#fafafa" stroke="#ebebeb"/><path d="M5.2 5.2 H18 L24 11.2 V24.2 H5.2 Z" fill="#f7f7f7" stroke="#d2d2d2" stroke-width="1"/><path d="M18 5.2 L18.6 10.6 L24 11.2" fill="none" stroke="#d2d2d2" stroke-width="1"/><path d="M8.2 11 L10.4 12.6 V11.2 H17.4 L19.2 12.2 V16.6 L17.4 17.8 H10.4 V16.4 L8.2 18 Z" fill="#c4c4c4"/><circle cx="20" cy="20" r="5.7" fill="#f7f7f7" stroke="#cdcdcd" stroke-width="1.1"/><circle cx="20" cy="16.9" r="1.2" fill="#c2c2c2"/><circle cx="23" cy="19.1" r="1.2" fill="#c2c2c2"/><circle cx="21.9" cy="22.6" r="1.2" fill="#c2c2c2"/><circle cx="18.1" cy="22.6" r="1.2" fill="#c2c2c2"/><circle cx="17" cy="19.1" r="1.2" fill="#c2c2c2"/><circle cx="20" cy="20" r="0.5" fill="#c8c8c8"/></svg>
<div class="c" style="left:710px;top:670px;width:96px;height:43px;line-height:43px;font-size:11.65px;color:#333;">13-4</div>
<div class="c" style="left:808px;top:670px;width:131px;height:43px;line-height:43px;font-size:11.65px;color:#333;">百家乐</div>
<div class="c" style="left:941px;top:670px;width:82px;height:43px;line-height:43px;font-size:11.65px;color:#333;">AS1</div>
<div class="c" style="left:1025px;top:670px;width:150px;height:43px;line-height:43px;font-size:11.65px;color:#333;"><span style="color:#1e5eff">闲</span>(3) <span style="color:#f00">庄</span>(7)</div>
<div class="c" style="left:1177px;top:670px;width:108px;height:43px;line-height:43px;font-size:11.65px;color:#1e5eff;">20.00</div>
<div class="c" style="left:1287px;top:670px;width:131px;height:43px;line-height:43px;font-size:11.65px;color:#333;">20.00</div>
<div class="c" style="left:1420px;top:670px;width:107px;height:43px;line-height:43px;font-size:11.65px;color:#333;">19.00</div>
<div class="c" style="left:1529px;top:670px;width:378px;height:43px;line-height:43px;font-size:11.65px;color:#333;">201.40/220.40</div>
<div class="ab" style="left:14px;top:714px;width:1893px;height:30px;background:#999"></div>
<div class="c" style="left:14px;top:714px;width:263px;height:30px;line-height:30px;font-size:11.65px;color:#fff">小计</div>
<div class="c" style="left:279px;top:714px;width:199px;height:30px;line-height:30px;font-size:11.65px;color:#fff">7</div>
<div class="c" style="left:1177px;top:714px;width:108px;height:30px;line-height:30px;font-size:11.65px;color:#fff">220.00</div>
<div class="c" style="left:1287px;top:714px;width:131px;height:30px;line-height:30px;font-size:11.65px;color:#fff">220.00</div>
<div class="c" style="left:1420px;top:714px;width:107px;height:30px;line-height:30px;font-size:11.65px;color:#fff">53.00</div>
<div class="ab" style="left:14px;top:746px;width:1893px;height:30px;background:#999"></div>
<div class="c" style="left:14px;top:746px;width:263px;height:30px;line-height:30px;font-size:11.65px;color:#fff">总计</div>
<div class="c" style="left:279px;top:746px;width:199px;height:30px;line-height:30px;font-size:11.65px;color:#fff">7</div>
<div class="c" style="left:1177px;top:746px;width:108px;height:30px;line-height:30px;font-size:11.65px;color:#fff">220.00</div>
<div class="c" style="left:1287px;top:746px;width:131px;height:30px;line-height:30px;font-size:11.65px;color:#fff">220.00</div>
<div class="c" style="left:1420px;top:746px;width:107px;height:30px;line-height:30px;font-size:11.65px;color:#fff">53.00</div>
<div class="ab" style="left:13px;top:744px;width:1895px;height:2px;background:#ddd"></div>
<div class="ab" style="left:14px;top:775px;width:1893px;height:2px;background:linear-gradient(#d8d8d8,#f4f4f4)"></div>
<div class="ab" style="left:277px;top:714px;width:2px;height:62px;background:#ddd"></div>
<div class="ab" style="left:478px;top:714px;width:2px;height:62px;background:#ddd"></div>
<div class="ab" style="left:708px;top:714px;width:2px;height:62px;background:#ddd"></div>
<div class="ab" style="left:806px;top:714px;width:2px;height:62px;background:#ddd"></div>
<div class="ab" style="left:939px;top:714px;width:2px;height:62px;background:#ddd"></div>
<div class="ab" style="left:1023px;top:714px;width:2px;height:62px;background:#ddd"></div>
<div class="ab" style="left:1175px;top:714px;width:2px;height:62px;background:#ddd"></div>
<div class="ab" style="left:1285px;top:714px;width:2px;height:62px;background:#ddd"></div>
<div class="ab" style="left:1418px;top:714px;width:2px;height:62px;background:#ddd"></div>
<div class="ab" style="left:1527px;top:714px;width:2px;height:62px;background:#ddd"></div>
<div class="ab" style="left:1907px;top:714px;width:1px;height:62px;background:#ddd"></div>
</body></html>
